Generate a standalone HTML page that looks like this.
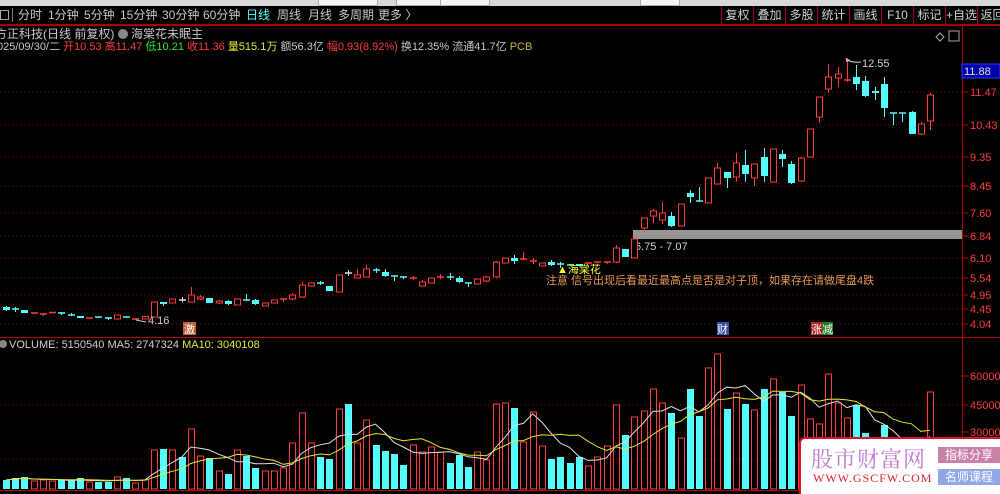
<!DOCTYPE html>
<html><head><meta charset="utf-8">
<style>
*{margin:0;padding:0;box-sizing:border-box}
body{width:1000px;height:494px;overflow:hidden;background:#000;position:relative;font-family:"Liberation Sans","Noto Sans CJK SC",sans-serif;color:#c8c8c8}
.top{position:absolute;left:0;top:0;width:1000px;height:6px;background:#d8d8d8}
.top i{position:absolute;top:0;height:6px;background:#f4f4f4;border:1px solid #aaa;border-top:none}
.menu{position:absolute;left:0;top:6px;width:1000px;height:19px;border-bottom:1px solid #a00000;font-size:12px;line-height:18px;white-space:nowrap}
.menu span{position:absolute;top:0}
.btn{position:absolute;top:0;height:19px;border-left:1px solid #a00000;text-align:center;font-size:12px;line-height:18px;color:#d0d0d0}
.t{position:absolute;white-space:nowrap;font-size:12px}
.wm{position:absolute;left:799px;top:437px;width:201px;height:57px;background:#fff;border:2px solid #e0102a;border-right:none;border-bottom:none;border-radius:6px 0 0 0}
</style></head><body>
<div class="top"><i style="left:318px;width:60px"></i><i style="left:396px;width:45px"></i><i style="left:440px;width:50px"></i><i style="left:640px;width:40px"></i></div>
<div class="menu">
<span style="left:0;top:4px;width:9px;height:10px;border:1px solid #aaa"></span>
<span style="left:12px;top:2px;width:1px;height:14px;background:#777"></span>
<span style="left:18px">分时</span><span style="left:48px">1分钟</span><span style="left:84px">5分钟</span><span style="left:120px">15分钟</span><span style="left:162px">30分钟</span><span style="left:203px">60分钟</span><span style="left:246px;color:#5ff">日线</span><span style="left:277px">周线</span><span style="left:308px">月线</span><span style="left:338px">多周期</span><span style="left:378px">更多 〉</span>
<div class="btn" style="left:721px;width:32px">复权</div><div class="btn" style="left:753px;width:32px">叠加</div><div class="btn" style="left:785px;width:32px">多股</div><div class="btn" style="left:817px;width:32px">统计</div><div class="btn" style="left:849px;width:32px">画线</div><div class="btn" style="left:881px;width:32px">F10</div><div class="btn" style="left:913px;width:32px">标记</div><div class="btn" style="left:945px;width:32px">+自选</div><div class="btn" style="left:977px;width:30px">返回</div>
</div>
<div class="t" style="left:-5px;top:25px;color:#c8c8c8">方正科技(日线 前复权) <span style="display:inline-block;width:10px;height:10px;border-radius:5px;background:#888;vertical-align:-1px"></span> 海棠花未眠主</div>
<div class="t" style="left:-3px;top:38px;font-size:11px;color:#c8c8c8">025/09/30/二 <span style="color:#ff3c3c">开10.53</span> <span style="color:#ff3c3c">高11.47</span> <span style="color:#2ee82e">低10.21</span> <span style="color:#ff3c3c">收11.36</span> <span style="color:#e8e830">量515.1万</span> 额56.3亿 <span style="color:#ff3c3c">幅0.93(8.92%)</span> 换12.35% 流通41.7亿 <span style="color:#d8b040">PCB</span></div>
<svg id="s" width="1000" height="494" style="position:absolute;left:0;top:0" font-family="Liberation Sans, Noto Sans CJK SC, sans-serif"></svg>
<div class="wm">
<div style="position:absolute;left:10px;top:4px;font-size:22px;color:#c07ad0;letter-spacing:1px;font-family:'Noto Serif CJK SC',serif">股市财富网</div>
<div style="position:absolute;left:12px;top:32px;font-size:12px;color:#e02030;font-family:'Liberation Serif',serif;letter-spacing:1px">WWW.GSCFW.COM</div>
<div style="position:absolute;left:137px;top:8px;width:62px;height:16px;background:#c880a8;color:#fff;font-size:12px;line-height:16px;text-align:center">指标分享</div>
<div style="position:absolute;left:137px;top:30px;width:62px;height:16px;background:#90a8e8;color:#fff;font-size:12px;line-height:16px;text-align:center">名师课程</div>
</div>
<script>
var C=[['c',307,310,306,311],['c',309,310,307,312],['c',310,313],['r',313,314],['r',314,315,313,316],['r',312.5,313.5],['c',313,314,312,315],['c',315,316,313,316],['c',316,318],['r',318,319],
['c',317,318],['c',318,319,317,320],['r',315,319],['c',317,318],['r',319,320],['r',316.5,319],['r',302,317],['c',302,304,302,306],['r',299,303],['w',300,300,297,302],
['r',295,302,287,302],['r',297,299,295,300],['c',298,303],['r',301,303,300,304],['c',301,304,300,305],['r',299,305],['c',300,300,294,301],['c',300,304,299,305],['r',303,306],['r',300,303],
['r',299,300,299,302],['r',295,299,293,300],['r',285,297,282,298],['r',283,286],['c',283,283,281,285],['c',286,291],['r',275,292],['w',273,273,270,276],['r',275,278,269,278],['r',269,277,265,277],
['c',270,270,268,273],['c',272,276,269,277],['c',276,277,275,281],['c',277,278,276,279],['r',278,279,276,280],['r',282,286,280,286],['r',278,283],['r',277,278,274,279],['c',277,277,273,280],['c',278,282,276,283],
['c',283,284,283,287],['r',279,284],['r',277,281,276,282],['r',262,277,261,278],['r',258,263],['c',258,261,255,264],['r',259,260,252,260],['r',261,262,258,264],['r',263,266],['c',262,265,260,266],
['c',264,265,262,268],['c',265,266],['c',264,266],['r',263,264],['r',262,263],['r',262,263,261,264],['r',248,262,245,263],['c',249,257],['r',239,258],['r',218,228,218,232],
['r',211,216,209,223],['r',213,220,202,224],['c',216,226,212,227],['r',204,226],['c',193,197,190,203],['c',201,201,187,202],['r',178,203],['r',168,184,163,184],['c',172,178,172,188],['r',163,177,153,182],
['c',165,174,150,182],['r',164,178,164,186],['c',157,176,148,182],['r',149,182],['c',154,159,150,167],['c',164,183,161,184],['r',158,181,157,182],['r',129,157],['r',97,117,97,123],['r',77,89,64,93],
['r',74,78,67,87],['r',80,81,58,82],['c',77,84,65,90],['c',81,96,76,97],['c',91,93,87,100],['c',84,108,77,117],['c',113,113,113,125],['c',113,113,113,122],['c',112,134,111,134],['r',124,134,122,135],['r',95,121,93,130]];
var V=[480,478,477,481,480,481,480,481,478,482,482,482,477,478,483,480,450,449,450,457,429,456,458,471,474,450,456,468,471,471,468,443,413,443,457,459,409,404,443,420,445,451,454,465,445,452,447,452,463,455,467,452,460,404,
403,408,442,412,446,459,457,463,457,466,457,446,405,435,417,411,389,403,413,438,389,416,368,354,409,393,404,410,389,379,392,416,385,419,424,374,403,418,405,433,440,425,450,450,440,450,392];
var RED='#ff3c3c',CY='#54fcfc',h='';
var ticks=[[92,'11.47'],[125,'10.43'],[157,'9.35'],[186,'8.45'],[213,'7.60'],[236,'6.84'],[258,'6.10'],[278,'5.54'],[295,'4.95'],[309,'4.45'],[324,'4.04']];
ticks.forEach(function(t){h+='<line x1="0" x2="962" y1="'+t[0]+'" y2="'+t[0]+'" stroke="#8a0000" stroke-dasharray="1,3"/><line x1="962" x2="968" y1="'+t[0]+'" y2="'+t[0]+'" stroke="#c00000"/><text x="970" y="'+(t[0]+4)+'" fill="'+RED+'" font-size="11">'+t[1]+'</text>';});
[[376,'60000'],[405,'45000'],[432,'30000'],[459,'']].forEach(function(t){h+='<line x1="0" x2="962" y1="'+t[0]+'" y2="'+t[0]+'" stroke="#8a0000" stroke-dasharray="1,3"/>'+(t[1]?'<line x1="962" x2="968" y1="'+t[0]+'" y2="'+t[0]+'" stroke="#c00000"/><text x="970" y="'+(t[0]+4)+'" fill="'+RED+'" font-size="11">'+t[1]+'</text>':'');});
h+='<rect x="633" y="230" width="329" height="9" fill="#969696"/><text x="635" y="250" fill="#d0d0d0" font-size="11">6.75 - 7.07</text>';
C.forEach(function(c,i){var x=Math.round(6+9.24*i)+0.5,hi=c[3]||c[1],lo=c[4]||c[2],col=c[0]=='r'?RED:(c[0]=='w'?'#e0e0e0':CY);
h+='<line x1="'+x+'" x2="'+x+'" y1="'+hi+'" y2="'+lo+'" stroke="'+col+'"/>';
if(c[2]-c[1]<1.5){h+='<line x1="'+(x-3.5)+'" x2="'+(x+3.5)+'" y1="'+c[1]+'" y2="'+c[1]+'" stroke="'+col+'" stroke-width="1.5"/>';}
else if(c[0]=='r'){h+='<rect x="'+(x-3)+'" y="'+c[1]+'" width="6" height="'+(c[2]-c[1])+'" fill="#000" stroke="'+RED+'"/>';}
else h+='<rect x="'+(x-3.5)+'" y="'+c[1]+'" width="7" height="'+(c[2]-c[1])+'" fill="'+col+'"/>';});
V.forEach(function(v,i){var x=Math.round(6+9.24*i)+0.5;if(C[i][0]=='r')h+='<rect x="'+(x-3)+'" y="'+v+'" width="6" height="'+(489-v)+'" fill="none" stroke="'+RED+'"/>';else h+='<rect x="'+(x-3.5)+'" y="'+v+'" width="7" height="'+(489-v)+'" fill="'+CY+'"/>';});
function ma(n,col){var p='';for(var i=0;i<V.length;i++){var s=0,k=0;for(var j=Math.max(0,i-n+1);j<=i;j++){s+=489-V[j];k++;}p+=(i?'L':'M')+(6+9.24*i).toFixed(1)+','+(489-s/k).toFixed(1);}h+='<path d="'+p+'" fill="none" stroke="'+col+'" stroke-width="1"/>';}
ma(5,'#e0e0e0');ma(10,'#e8e830');
h+='<line x1="0" x2="1000" y1="25.5" y2="25.5" stroke="#b00000"/><line x1="962.5" x2="962.5" y1="26" y2="494" stroke="#b00000"/><line x1="0" x2="1000" y1="337.5" y2="337.5" stroke="#b00000"/><line x1="0" x2="962" y1="490.5" y2="490.5" stroke="#b00000"/>';
h+='<rect x="962" y="64" width="38" height="14" fill="#0000a8" stroke="#2040ff"/><text x="964" y="75" fill="#e0e0e0" font-size="11">11.88</text>';
h+='<path d="M936,37 l4,-4 l4,4 l-4,4z" fill="none" stroke="#aaa"/><rect x="949" y="31" width="10" height="10" fill="none" stroke="#aaa"/>';
h+='<path d="M846,60 l4,0 M846,58 l1,4 M847,60 q6,3 14,2" fill="none" stroke="#ccc"/><text x="862" y="67" fill="#d0d0d0" font-size="11">12.55</text>';
h+='<path d="M136,320 l10,2" stroke="#ccc"/><text x="148" y="324" fill="#d0d0d0" font-size="11">4.16</text>';
h+='<text x="557" y="273" fill="#ffff30" font-size="11">▲海棠花</text><text x="546" y="284" fill="#e89a50" font-size="11">注意 信号出现后看最近最高点是否是对子顶，如果存在请做尾盘4跌</text>';
h+='<rect x="183" y="322" width="13" height="13" fill="#c06030"/><text x="184" y="333" fill="#fff" font-size="11">激</text>';
h+='<rect x="717" y="322" width="12" height="13" fill="#3050a0"/><text x="717" y="333" fill="#fff" font-size="11">财</text>';
h+='<rect x="811" y="322" width="11" height="13" fill="#b02020"/><rect x="822" y="322" width="11" height="13" fill="#208020"/><text x="811" y="333" fill="#fff" font-size="11">涨减</text>';
h+='<circle cx="3" cy="344" r="4" fill="#888"/><text x="9" y="348" fill="#d0d0d0" font-size="11">VOLUME: 5150540  MA5: 2747324  <tspan fill="#e8e830">MA10: 3040108</tspan></text>';
document.getElementById('s').innerHTML=h;
</script>
</body></html>
